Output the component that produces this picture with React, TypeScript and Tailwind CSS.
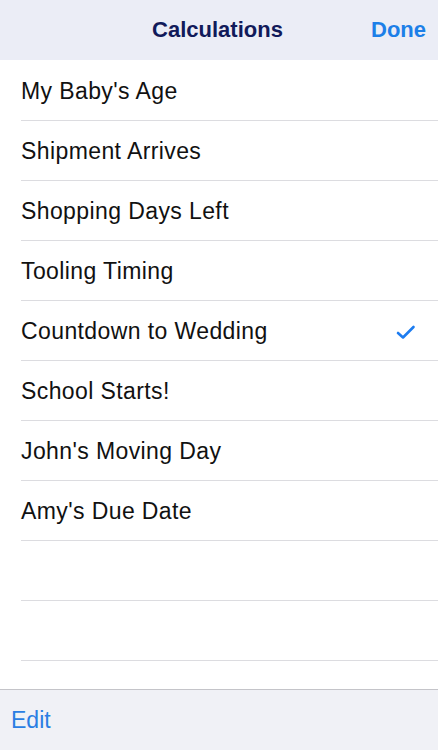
import React from "react";

const items = [
  "My Baby's Age",
  "Shipment Arrives",
  "Shopping Days Left",
  "Tooling Timing",
  "Countdown to Wedding",
  "School Starts!",
  "John's Moving Day",
  "Amy's Due Date",
  "",
  "",
];

export default function App() {
  return (
    <div
      className="w-[438px] h-[750px] flex flex-col bg-white overflow-hidden"
      style={{ fontFamily: '"Liberation Sans", Arial, sans-serif' }}
    >
      <div className="h-[60px] shrink-0 bg-[#ebedf6] flex items-start pt-[20px] pr-[12px]">
        <div className="flex-1" />
        <span className="text-[22px] font-bold text-[#111a5a] leading-[20px] ml-[64px]">Calculations</span>
        <div className="flex-1" />
        <span className="text-[22px] font-bold text-[#1c7fe8] leading-[20px]">Done</span>
      </div>
      <div className="flex-1 flex flex-col pt-px">
        {items.map((t, i) => (
          <div key={i} className="h-[60px] shrink-0 pl-[21px] flex">
            <div className="flex-1 flex items-center justify-between border-b border-[#dcdce0] pr-[22px]">
              <span className="text-[23px] tracking-[0.4px] text-[#111] leading-none mt-[1px]">{t}</span>
              {i === 4 && (
                <svg width="20" height="15" viewBox="0 0 20 15" className="mt-[3px]">
                  <path
                    d="M2 8 L7 12.5 L17.5 2"
                    fill="none"
                    stroke="#1d7cf0"
                    strokeWidth="2.6"
                    strokeLinecap="round"
                    strokeLinejoin="round"
                  />
                </svg>
              )}
            </div>
          </div>
        ))}
      </div>
      <div className="h-[61px] shrink-0 bg-[#f0f1f6] border-t border-[#c4c4c9] flex items-center pl-[11px]">
        <span className="text-[23px] text-[#2a7ee3] leading-none">Edit</span>
      </div>
    </div>
  );
}
